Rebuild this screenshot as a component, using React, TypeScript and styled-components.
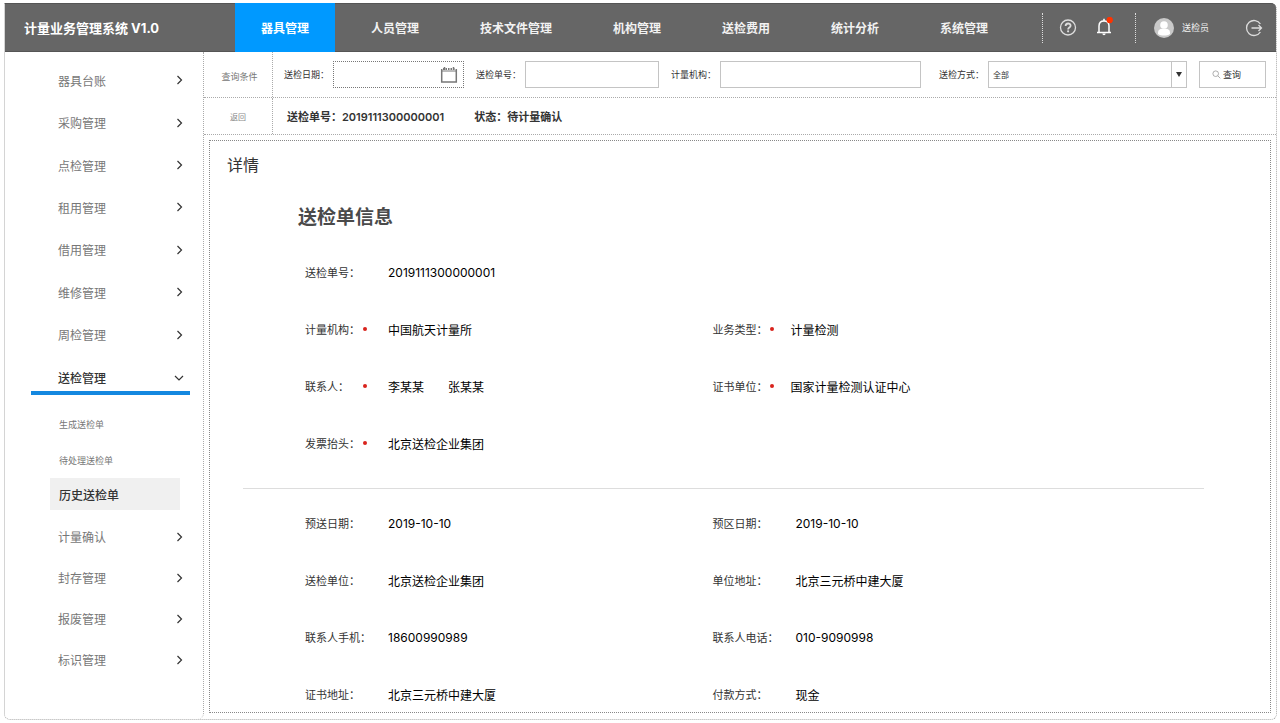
import React from "react";
import styled, { createGlobalStyle, css } from "styled-components";

const line = "1px dotted #aaa";

const GlobalStyle = createGlobalStyle`
  *, *::before, *::after { box-sizing: border-box; }
  body {
    margin: 0;
    background: #fff;
    color: #333;
    font-family: Inter, "Noto Sans CJK SC", sans-serif;
    font-size: 12px;
  }
  button, input, select { font: inherit; color: inherit; }
  ul { list-style: none; margin: 0; padding: 0; }
  a { color: inherit; text-decoration: none; }
`;

const Shell = styled.div`
  display: flex;
  flex-direction: column;
  min-height: calc(100vh - 6px);
  margin: 3px 3px 3px 4px;
  border: ${line};
  border-top: 0;
  border-radius: 0 6px 6px 6px;
`;

const Header = styled.header`
  display: flex;
  align-items: stretch;
  height: 49px;
  background: #666;
  color: #f2f2f2;
  border-top: 1px solid #555;
  border-bottom: 1px solid #555;
  border-radius: 0 5px 0 0;
`;

const Brand = styled.h1`
  display: flex;
  align-items: center;
  width: 230px;
  margin: 0;
  padding-left: 19px;
  font-size: 13px;
  font-weight: 700;
  color: #fff;
  white-space: nowrap;
`;

const TopNav = styled.nav`
  display: flex;
  flex: 1;
  gap: 1px;
`;

const TopLink = styled.a<{ $active?: boolean }>`
  display: flex;
  align-items: center;
  padding: 0 30px;
  font-weight: 600;
  white-space: nowrap;
  ${(p) =>
    p.$active &&
    css`
      padding: 0 26px;
      margin: -1px 5px -1px 0;
      background: #0099ff;
      color: #fff;
      font-weight: 700;
    `}
`;

const Tools = styled.div`
  display: flex;
  align-items: center;
`;

const ToolGroup = styled.div<{ $user?: boolean }>`
  display: flex;
  align-items: center;
  gap: ${(p) => (p.$user ? 8 : 18)}px;
  height: 30px;
  padding: 0 ${(p) => (p.$user ? 13 : 22)}px 0 ${(p) => (p.$user ? 18 : 16)}px;
  border-left: 1px dotted #ddd;
  font-size: 9px;
`;

const IconButton = styled.button<{ $push?: boolean }>`
  display: flex;
  padding: 0;
  border: 0;
  background: none;
  color: #ddd;
  margin-left: ${(p) => (p.$push ? 28 : 0)}px;
`;

const Body = styled.div`
  display: flex;
  flex: 1;
`;

const Sidebar = styled.nav`
  width: 199px;
  flex: none;
  padding-top: 7px;
  border-right: ${line};
  border-radius: 0 0 6px 0;
`;

const MenuList = styled.ul<{ $height: number }>`
  display: grid;
  grid-auto-rows: 1fr;
  height: ${(p) => p.$height}px;
`;

const MenuButton = styled.button<{ $active?: boolean }>`
  display: flex;
  align-items: center;
  justify-content: space-between;
  width: 159px;
  height: 100%;
  margin-left: 26px;
  padding: 0 6px 0 27px;
  border: 0;
  background: none;
  color: #777;
  ${(p) =>
    p.$active &&
    css`
      height: 39px;
      padding-top: 8px;
      border-bottom: 4px solid #1488e0;
      color: #333;
      font-weight: 500;
    `}
`;

const SubMenu = styled.ul`
  padding: 11px 0 6px 45px;
`;

const SubLink = styled.a<{ $active?: boolean }>`
  display: flex;
  align-items: center;
  width: 130px;
  height: 36px;
  padding-left: 9px;
  font-size: 9px;
  color: #777;
  ${(p) =>
    p.$active &&
    css`
      height: 32px;
      background: #f0f0f0;
      color: #333;
      font-size: 12px;
      font-weight: 500;
    `}
`;

const Main = styled.main`
  display: flex;
  flex-direction: column;
  flex: 1;
  min-width: 0;
`;

const Strip = styled.div<{ $height: number }>`
  display: flex;
  height: ${(p) => p.$height}px;
  border-bottom: ${line};
`;

const StripHead = styled.div<{ $small?: boolean }>`
  display: flex;
  align-items: center;
  justify-content: center;
  flex: none;
  width: 69px;
  padding-left: ${(p) => (p.$small ? 0 : 3)}px;
  padding-top: ${(p) => (p.$small ? 0 : 4)}px;
  border-right: ${line};
  font-size: ${(p) => (p.$small ? 8 : 9)}px;
  color: #777;
`;

const BackButton = styled.button`
  padding: 0;
  border: 0;
  background: none;
  color: #888;
`;

const QueryForm = styled.form`
  display: flex;
  flex: 1;
  align-items: center;
  gap: 12px;
  padding: 0 10px 0 11px;
`;

const Field = styled.div<{ $grow: number; $wide?: boolean }>`
  display: flex;
  align-items: center;
  flex: ${(p) => p.$grow} 1 0;
  min-width: 0;
  margin-left: ${(p) => (p.$wide ? 6 : 0)}px;
`;

const FieldLabel = styled.label`
  flex: none;
  width: 49px;
  font-size: 9px;
  white-space: nowrap;
`;

const InputBox = styled.div<{ $dashed?: boolean }>`
  display: flex;
  align-items: center;
  flex: 1;
  min-width: 0;
  height: 27px;
  border: 1px ${(p) => (p.$dashed ? "dotted #777" : "solid #c4c4c4")};
  background: #fff;
`;

const TextInput = styled.input`
  flex: 1;
  min-width: 0;
  height: 100%;
  padding: 0 4px;
  border: 0;
  outline: 0;
  background: none;
  font-size: 9px;
`;

const CalendarButton = styled(IconButton)`
  margin-right: 5px;
  color: #777;
`;

const Select = styled.select`
  flex: 1;
  min-width: 0;
  height: 100%;
  padding: 0 4px;
  border: 0;
  outline: 0;
  background: none;
  appearance: none;
  font-size: 8px;
`;

const SelectArrow = styled.span`
  display: flex;
  align-items: center;
  justify-content: center;
  width: 15px;
  height: 100%;
  border-left: 1px solid #c4c4c4;
`;

const SearchButton = styled.button`
  display: flex;
  align-items: center;
  justify-content: center;
  gap: 2px;
  width: 67px;
  height: 27px;
  padding: 0 16px 0 4px;
  border: 1px solid #c4c4c4;
  background: #fff;
  font-size: 9px;
  white-space: nowrap;
`;

const Summary = styled.div`
  display: flex;
  align-items: center;
  gap: 30px;
  padding-left: 14px;
  font-size: 11px;
  font-weight: 600;
`;

const Panel = styled.section`
  flex: 1;
  margin: 5px 5px 6px;
  padding: 12px 66px 4px 33px;
  border: 1px dotted #888;
`;

const PanelTitle = styled.h2`
  margin: 0 0 0 -16px;
  font-size: 16px;
  line-height: 24px;
  font-weight: 400;
`;

const SectionTitle = styled.h3`
  margin: 27px 0 28px 55px;
  font-size: 19px;
  line-height: 28px;
  font-weight: 600;
  color: #4a4a4a;
`;

const Details = styled.dl`
  display: grid;
  grid-template-columns: 407fr 491fr;
  grid-auto-rows: 24px;
  row-gap: 33px;
  margin: 0;
  padding-left: 62px;
`;

const Divider = styled.hr`
  height: 1px;
  margin: 33px 0 22px;
  border: 0;
  background: #ddd;
`;

const Detail = styled.div<{ $full?: boolean }>`
  display: flex;
  align-items: center;
  ${(p) => p.$full && "grid-column: 1 / -1;"}
`;

const Term = styled.dt<{ $width: number }>`
  display: flex;
  align-items: center;
  flex: none;
  width: ${(p) => p.$width}px;
  font-size: 11px;
  white-space: nowrap;
`;

const TermText = styled.span`
  min-width: 55px;
`;

const Required = styled.span`
  width: 4px;
  height: 4px;
  margin-left: 3px;
  border-radius: 50%;
  background: #d9231c;
`;

const Value = styled.dd`
  display: flex;
  gap: 24px;
  margin: 0;
  color: #000;
  white-space: nowrap;
`;

const Chevron = ({ down }: { down?: boolean }) => (
  <svg width="10" height="10" viewBox="0 0 10 10" fill="none" stroke="#333" strokeWidth="1.2">
    <path d={down ? "M1 3l4 4 4-4" : "M3.5 1l4 4-4 4"} />
  </svg>
);

const HelpIcon = () => (
  <svg width="18" height="18" viewBox="0 0 18 18" fill="none" stroke="currentColor">
    <circle cx="9" cy="8.500" r="7.500" strokeWidth="1.300" />
    <path d="M6.600 7c0-3.300 5-3.300 5-.3 0 1.900-2.500 1.800-2.500 3.700" strokeWidth="1.800" />
    <circle cx="9.100" cy="12.300" r="1.100" fill="currentColor" stroke="none" />
  </svg>
);

const BellIcon = () => (
  <svg width="18" height="22" viewBox="0 0 18 22" fill="none">
    <g stroke="#fff" strokeWidth="1.5">
      <path d="M2 15.500h14M4 15V9C4 6 6 4 9 4s5 2 5 5v6" />
    </g>
    <path d="M8.200 1.800h1.600V4H8.200zM7.400 16.500h3.200c0 2.300-3.200 2.300-3.200 0z" fill="#fff" />
    <circle cx="14.700" cy="2.900" r="2.900" fill="#ff3300" />
    <circle cx="14.700" cy="3.100" r="3.100" fill="#ff3300" />
  </svg>
);

const Avatar = () => (
  <svg width="20" height="20" viewBox="0 0 20 20">
    <circle cx="10" cy="10" r="10" fill="#c9c9c9" />
    <circle cx="10" cy="7" r="3.800" fill="#fff" />
    <path d="M4 16v-1.500C4 12 6 11 8 10.800h4c2 .2 4 1.200 4 3.700V16c-3 2-9 2-12 0z" fill="#fff" />
  </svg>
);

const LogoutIcon = () => (
  <svg width="18" height="18" viewBox="0 0 18 18" fill="none" stroke="currentColor" strokeWidth="1.300">
    <path d="M15.400 5A7.500 7.500 0 1 0 15.400 13M6.500 9h10M13.500 6l3 3-3 3" />
  </svg>
);

const CalendarIcon = () => (
  <svg width="18" height="18" viewBox="0 0 18 18" fill="none" stroke="currentColor">
    <path d="M1.700 3V16h14.600V3" strokeWidth="1.500" />
    <path d="M1.500 5h15" strokeWidth="1" />
    <path d="M3 3h12" strokeWidth="2" strokeDasharray="1.500 1" />
    <path d="M4.500 1v3M13.500 1v3" strokeWidth="1.500" />
  </svg>
);

const SearchIcon = () => (
  <svg width="9" height="9" viewBox="0 0 9 9" fill="none" stroke="#999" strokeWidth=".8">
    <circle cx="3.700" cy="3.700" r="2.800" />
    <path d="M5.800 5.800l2.500 2.500" />
  </svg>
);

const topItems = ["人员管理", "技术文件管理", "机构管理", "送检费用", "统计分析", "系统管理"];
const menuBefore = ["器具台账", "采购管理", "点检管理", "租用管理", "借用管理", "维修管理", "周检管理"];
const menuAfter = ["计量确认", "封存管理", "报废管理", "标识管理"];

type Item = { label: string; value: string[]; required?: boolean; full?: boolean; width?: number };

const orderInfo: Item[] = [
  { label: "送检单号：", value: ["2019111300000001"], full: true },
  { label: "计量机构：", value: ["中国航天计量所"], required: true },
  { label: "业务类型：", value: ["计量检测"], required: true, width: 78 },
  { label: "联系人：", value: ["李某某", "张某某"], required: true },
  { label: "证书单位：", value: ["国家计量检测认证中心"], required: true, width: 78 },
  { label: "发票抬头：", value: ["北京送检企业集团"], required: true, full: true },
];

const deliveryInfo: Item[] = [
  { label: "预送日期：", value: ["2019-10-10"] },
  { label: "预区日期：", value: ["2019-10-10"] },
  { label: "送检单位：", value: ["北京送检企业集团"] },
  { label: "单位地址：", value: ["北京三元桥中建大厦"] },
  { label: "联系人手机：", value: ["18600990989"] },
  { label: "联系人电话：", value: ["010-9090998"] },
  { label: "证书地址：", value: ["北京三元桥中建大厦"] },
  { label: "付款方式：", value: ["现金"] },
];

const DetailList = ({ items }: { items: Item[] }) => (
  <Details>
    {items.map((item) => (
      <Detail key={item.label} $full={item.full}>
        <Term $width={item.width ?? 83}>
          <TermText>{item.label}</TermText>
          {item.required && <Required />}
        </Term>
        <Value>
          {item.value.map((text) => (
            <span key={text}>{text}</span>
          ))}
        </Value>
      </Detail>
    ))}
  </Details>
);

const MenuGroup = ({ items, height }: { items: string[]; height: number }) => (
  <MenuList $height={height}>
    {items.map((name) => (
      <li key={name}>
        <MenuButton type="button">
          {name}
          <Chevron />
        </MenuButton>
      </li>
    ))}
  </MenuList>
);

export default function App() {
  return (
    <>
      <GlobalStyle />
      <Shell>
        <Header>
          <Brand>计量业务管理系统 V1.0</Brand>
          <TopNav>
            <TopLink href="#" $active>器具管理</TopLink>
            {topItems.map((name) => (
              <TopLink key={name} href="#">{name}</TopLink>
            ))}
          </TopNav>
          <Tools>
            <ToolGroup>
              <IconButton type="button" aria-label="帮助"><HelpIcon /></IconButton>
              <IconButton type="button" aria-label="通知"><BellIcon /></IconButton>
            </ToolGroup>
            <ToolGroup $user>
              <Avatar />
              <span>送检员</span>
              <IconButton type="button" aria-label="退出" $push><LogoutIcon /></IconButton>
            </ToolGroup>
          </Tools>
        </Header>
        <Body>
          <Sidebar>
            <MenuGroup items={menuBefore} height={297} />
            <MenuButton type="button" $active>
              送检管理
              <Chevron down />
            </MenuButton>
            <SubMenu>
              <li><SubLink href="#">生成送检单</SubLink></li>
              <li><SubLink href="#">待处理送检单</SubLink></li>
              <li><SubLink href="#" $active>历史送检单</SubLink></li>
            </SubMenu>
            <MenuGroup items={menuAfter} height={164} />
          </Sidebar>
          <Main>
            <Strip $height={46}>
              <StripHead>查询条件</StripHead>
              <QueryForm>
                <Field $grow={180}>
                  <FieldLabel htmlFor="date">送检日期：</FieldLabel>
                  <InputBox $dashed>
                    <TextInput id="date" />
                    <CalendarButton type="button" aria-label="选择日期"><CalendarIcon /></CalendarButton>
                  </InputBox>
                </Field>
                <Field $grow={183}>
                  <FieldLabel htmlFor="order">送检单号：</FieldLabel>
                  <InputBox><TextInput id="order" /></InputBox>
                </Field>
                <Field $grow={250}>
                  <FieldLabel htmlFor="org">计量机构：</FieldLabel>
                  <InputBox><TextInput id="org" /></InputBox>
                </Field>
                <Field $grow={248} $wide>
                  <FieldLabel htmlFor="mode">送检方式：</FieldLabel>
                  <InputBox>
                    <Select id="mode"><option>全部</option></Select>
                    <SelectArrow>
                      <svg width="6" height="5" viewBox="0 0 6 5"><path d="M0 0h6L3 5z" fill="#333" /></svg>
                    </SelectArrow>
                  </InputBox>
                </Field>
                <SearchButton type="button"><SearchIcon />查询</SearchButton>
              </QueryForm>
            </Strip>
            <Strip $height={37}>
              <StripHead $small><BackButton type="button">返回</BackButton></StripHead>
              <Summary>
                <span>送检单号：2019111300000001</span>
                <span>状态：待计量确认</span>
              </Summary>
            </Strip>
            <Panel>
              <PanelTitle>详情</PanelTitle>
              <SectionTitle>送检单信息</SectionTitle>
              <DetailList items={orderInfo} />
              <Divider />
              <DetailList items={deliveryInfo} />
            </Panel>
          </Main>
        </Body>
      </Shell>
    </>
  );
}
